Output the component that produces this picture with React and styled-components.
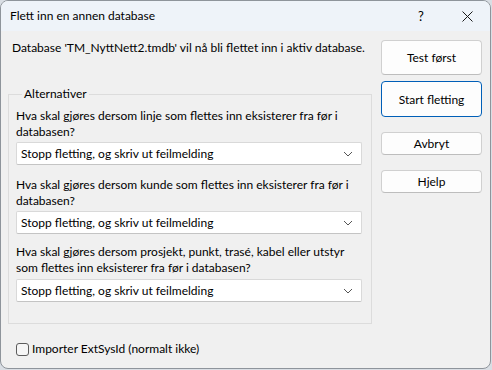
import React from "react";
import styled, { createGlobalStyle } from "styled-components";

const Global = createGlobalStyle`
  html, body { margin: 0; padding: 0; background: #d9dee4; }
  body { font-family: "Segoe UI", Lato, "Noto Sans", sans-serif; font-size: 12px; color: #000; }
  * { box-sizing: border-box; }
`;

const Win = styled.div`
  width: 491px;
  height: 369px;
  background: #f0f0f0;
  border: 1px solid #8e949b;
  border-radius: 8px;
  overflow: hidden;
  display: flex;
  flex-direction: column;
`;

const TitleBar = styled.div`
  height: 30px;
  background: #eef3f9;
  display: flex;
  align-items: center;
  padding-left: 9px;
`;

const Title = styled.div`
  flex: 1;
  font-size: 12px;
  line-height: 16px;
`;

const TitleBtn = styled.div`
  width: 46px;
  height: 30px;
  display: flex;
  align-items: center;
  justify-content: center;
  font-size: 13px;
`;

const Body = styled.div`
  flex: 1;
  display: flex;
  flex-direction: column;
  padding: 9px 7px 0 7px;
`;

const Main = styled.div`
  display: flex;
  gap: 9px;
`;

const Left = styled.div`
  width: 364px;
  display: flex;
  flex-direction: column;
`;

const Info = styled.div`
  line-height: 16px;
  padding-left: 4px;
  margin-bottom: 30px;
`;

const Group = styled.fieldset`
  margin: 0;
  border: 1px solid #dcdcdc;
  padding: 4px 9px 21px 7px;
`;

const Legend = styled.legend`
  padding: 0 2px;
  margin-left: 6px;
  line-height: 16px;
`;

const Question = styled.div`
  line-height: 16px;
  margin-top: ${(p) => p.$mt}px;
`;

const Select = styled.div`
  margin-top: ${(p) => p.$mt}px;
  height: 23px;
  background: #fff;
  border: 1px solid #d9d9d9;
  border-bottom-color: #c4c4c4;
  border-radius: 2px;
  display: flex;
  align-items: center;
  padding: 0 8px 0 4px;
  justify-content: space-between;
`;

const Right = styled.div`
  width: 101px;
  display: flex;
  flex-direction: column;
`;

const Button = styled.div`
  height: ${(p) => p.$h}px;
  margin-top: ${(p) => p.$mt}px;
  background: #fdfdfd;
  border: 1px solid ${(p) => (p.$primary ? "#005fb8" : "#d0d0d0")};
  border-bottom-color: ${(p) => (p.$primary ? "#005fb8" : "#bdbdbd")};
  border-radius: 4px;
  display: flex;
  align-items: center;
  justify-content: center;
`;

const CheckRow = styled.label`
  display: flex;
  align-items: center;
  gap: 3px;
  margin-top: 17px;
  padding-left: 8px;
  line-height: 16px;
`;

const Box = styled.span`
  width: 13px;
  height: 13px;
  border: 1px solid #5c5c5c;
  border-radius: 3px;
  background: #f6f6f6;
`;

const Chevron = () => (
  <svg width="10" height="6" viewBox="0 0 10 6">
    <path d="M1 1 L5 5 L9 1" fill="none" stroke="#555" strokeWidth="1" />
  </svg>
);

const CloseIcon = () => (
  <svg width="11" height="11" viewBox="0 0 11 11">
    <path d="M0.5 0.5 L10.5 10.5 M10.5 0.5 L0.5 10.5" stroke="#1a1a1a" strokeWidth="1" />
  </svg>
);

const OPT = "Stopp fletting, og skriv ut feilmelding";

export default function App() {
  return (
    <>
      <Global />
      <Win>
        <TitleBar>
          <Title>Flett inn en annen database</Title>
          <TitleBtn>?</TitleBtn>
          <TitleBtn><CloseIcon /></TitleBtn>
        </TitleBar>
        <Body>
          <Main>
            <Left>
              <Info>Database 'TM_NyttNett2.tmdb' vil nå bli flettet inn i aktiv database.</Info>
              <Group>
                <Legend>Alternativer</Legend>
                <Question $mt={2}>Hva skal gjøres dersom linje som flettes inn eksisterer fra før i databasen?</Question>
                <Select $mt={2}>{OPT}<Chevron /></Select>
                <Question $mt={12}>Hva skal gjøres dersom kunde som flettes inn eksisterer fra før i databasen?</Question>
                <Select $mt={2}>{OPT}<Chevron /></Select>
                <Question $mt={10}>Hva skal gjøres dersom prosjekt, punkt, trasé, kabel eller utstyr som flettes inn eksisterer fra før i databasen?</Question>
                <Select $mt={3}>{OPT}<Chevron /></Select>
              </Group>
            </Left>
            <Right>
              <Button $h={35} $mt={0}>Test først</Button>
              <Button $h={36} $mt={6} $primary>Start fletting</Button>
              <Button $h={23} $mt={15}>Avbryt</Button>
              <Button $h={23} $mt={15}>Hjelp</Button>
            </Right>
          </Main>
          <CheckRow>
            <Box />
            Importer ExtSysId (normalt ikke)
          </CheckRow>
        </Body>
      </Win>
    </>
  );
}
